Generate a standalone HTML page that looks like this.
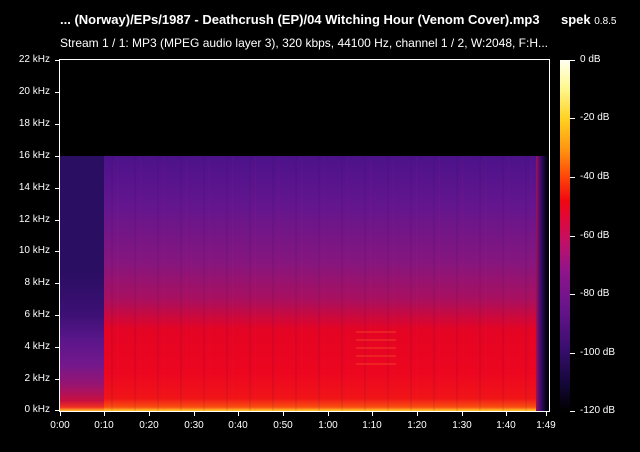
<!DOCTYPE html>
<html><head><style>
*{margin:0;padding:0}
body{width:640px;height:452px;background:#000;position:relative;overflow:hidden;font-family:"Liberation Sans",Arial,sans-serif;color:#fff}
.a{position:absolute}
.t1{left:60px;top:12px;font-size:13px;font-weight:bold;white-space:nowrap}
.t2{left:60px;top:36px;font-size:12px;white-space:nowrap}
.sp{left:561px;top:12px;font-size:13px;font-weight:bold;white-space:nowrap}
.sp span{font-size:10px;font-weight:normal}
.yl{font-size:10px;width:50px;text-align:right;left:0}
.xl{font-size:10px;width:40px;text-align:center}
.dl{font-size:10px;left:580px}
.tk{background:#fff}
</style></head><body>
<div class="a t1">... (Norway)/EPs/1987 - Deathcrush (EP)/04 Witching Hour (Venom Cover).mp3</div>
<div class="a sp">spek <span>0.8.5</span></div>
<div class="a t2">Stream 1 / 1: MP3 (MPEG audio layer 3), 320 kbps, 44100 Hz, channel 1 / 2, W:2048, F:H...</div>

<!-- spectrogram -->
<div class="a" style="left:60px;top:156px;width:44px;height:255px;background:linear-gradient(#2a0e62 0%,#2a0e62 45%,#3c1074 62%,#5a168a 72%,#74188c 82%,#9a1470 90%,#c81040 96%,#f03020 98.5%,#ffc030 100%)"></div>
<div class="a" style="left:104px;top:156px;width:434px;height:255px;background:linear-gradient(#4c128a 0%,#64168e 20%,#86167e 42%,#a81060 56%,#d00838 64%,#e40424 68%,#ec0620 85%,#f01418 95%,#f85010 98.5%,#ffd030 100%)"></div>
<div class="a" style="left:104px;top:156px;width:434px;height:255px;background:repeating-linear-gradient(90deg,rgba(0,0,40,0) 0 7px,rgba(40,0,80,.08) 7px 9px,rgba(0,0,40,0) 9px 13px,rgba(255,40,80,.06) 13px 14px,rgba(0,0,0,0) 14px 23px);"></div>
<div class="a" style="left:536px;top:156px;width:12px;height:255px;background:linear-gradient(90deg,#a0105a,#3a0c70 40%,#0c0424 80%,#000)"></div>
<div class="a" style="left:356px;top:325px;width:40px;height:40px;background:repeating-linear-gradient(#0000 0 6px,rgba(255,110,40,.25) 6px 8px)"></div>

<!-- frame -->
<div class="a" style="left:59px;top:59px;width:489px;height:351px;border:1px solid #fff"></div>

<!-- y ticks -->
<div class="a tk" style="left:55px;top:60px;width:5px;height:1px"></div><div class="a yl" style="top:54px">22 kHz</div>
<div class="a tk" style="left:55px;top:92px;width:5px;height:1px"></div><div class="a yl" style="top:86px">20 kHz</div>
<div class="a tk" style="left:55px;top:124px;width:5px;height:1px"></div><div class="a yl" style="top:118px">18 kHz</div>
<div class="a tk" style="left:55px;top:156px;width:5px;height:1px"></div><div class="a yl" style="top:150px">16 kHz</div>
<div class="a tk" style="left:55px;top:188px;width:5px;height:1px"></div><div class="a yl" style="top:182px">14 kHz</div>
<div class="a tk" style="left:55px;top:220px;width:5px;height:1px"></div><div class="a yl" style="top:214px">12 kHz</div>
<div class="a tk" style="left:55px;top:251px;width:5px;height:1px"></div><div class="a yl" style="top:245px">10 kHz</div>
<div class="a tk" style="left:55px;top:283px;width:5px;height:1px"></div><div class="a yl" style="top:277px">8 kHz</div>
<div class="a tk" style="left:55px;top:315px;width:5px;height:1px"></div><div class="a yl" style="top:309px">6 kHz</div>
<div class="a tk" style="left:55px;top:347px;width:5px;height:1px"></div><div class="a yl" style="top:341px">4 kHz</div>
<div class="a tk" style="left:55px;top:379px;width:5px;height:1px"></div><div class="a yl" style="top:373px">2 kHz</div>
<div class="a tk" style="left:55px;top:410px;width:5px;height:1px"></div><div class="a yl" style="top:404px">0 kHz</div>

<!-- x ticks -->
<div class="a tk" style="left:60px;top:411px;width:1px;height:5px"></div><div class="a xl" style="left:40px;top:420px">0:00</div>
<div class="a tk" style="left:104px;top:411px;width:1px;height:5px"></div><div class="a xl" style="left:84px;top:420px">0:10</div>
<div class="a tk" style="left:149px;top:411px;width:1px;height:5px"></div><div class="a xl" style="left:129px;top:420px">0:20</div>
<div class="a tk" style="left:194px;top:411px;width:1px;height:5px"></div><div class="a xl" style="left:174px;top:420px">0:30</div>
<div class="a tk" style="left:238px;top:411px;width:1px;height:5px"></div><div class="a xl" style="left:218px;top:420px">0:40</div>
<div class="a tk" style="left:283px;top:411px;width:1px;height:5px"></div><div class="a xl" style="left:263px;top:420px">0:50</div>
<div class="a tk" style="left:328px;top:411px;width:1px;height:5px"></div><div class="a xl" style="left:308px;top:420px">1:00</div>
<div class="a tk" style="left:372px;top:411px;width:1px;height:5px"></div><div class="a xl" style="left:352px;top:420px">1:10</div>
<div class="a tk" style="left:417px;top:411px;width:1px;height:5px"></div><div class="a xl" style="left:397px;top:420px">1:20</div>
<div class="a tk" style="left:462px;top:411px;width:1px;height:5px"></div><div class="a xl" style="left:442px;top:420px">1:30</div>
<div class="a tk" style="left:506px;top:411px;width:1px;height:5px"></div><div class="a xl" style="left:486px;top:420px">1:40</div>
<div class="a tk" style="left:546px;top:411px;width:1px;height:5px"></div><div class="a xl" style="left:526px;top:420px">1:49</div>

<!-- colorbar -->
<div class="a" style="left:560px;top:60px;width:10px;height:351px;background:linear-gradient(#fffff0 0%,#fff890 8%,#ffd020 17%,#ff9010 26%,#ff4808 33%,#f00810 40%,#e00838 45%,#c01068 52%,#90148a 60%,#6a148c 70%,#3a0e70 82%,#180840 91%,#000 100%)"></div>
<div class="a tk" style="left:570px;top:60px;width:5px;height:1px"></div><div class="a dl" style="top:54px">0 dB</div>
<div class="a tk" style="left:570px;top:118px;width:5px;height:1px"></div><div class="a dl" style="top:112px">-20 dB</div>
<div class="a tk" style="left:570px;top:177px;width:5px;height:1px"></div><div class="a dl" style="top:171px">-40 dB</div>
<div class="a tk" style="left:570px;top:236px;width:5px;height:1px"></div><div class="a dl" style="top:230px">-60 dB</div>
<div class="a tk" style="left:570px;top:294px;width:5px;height:1px"></div><div class="a dl" style="top:288px">-80 dB</div>
<div class="a tk" style="left:570px;top:353px;width:5px;height:1px"></div><div class="a dl" style="top:347px">-100 dB</div>
<div class="a tk" style="left:570px;top:411px;width:5px;height:1px"></div><div class="a dl" style="top:405px">-120 dB</div>
</body></html>
